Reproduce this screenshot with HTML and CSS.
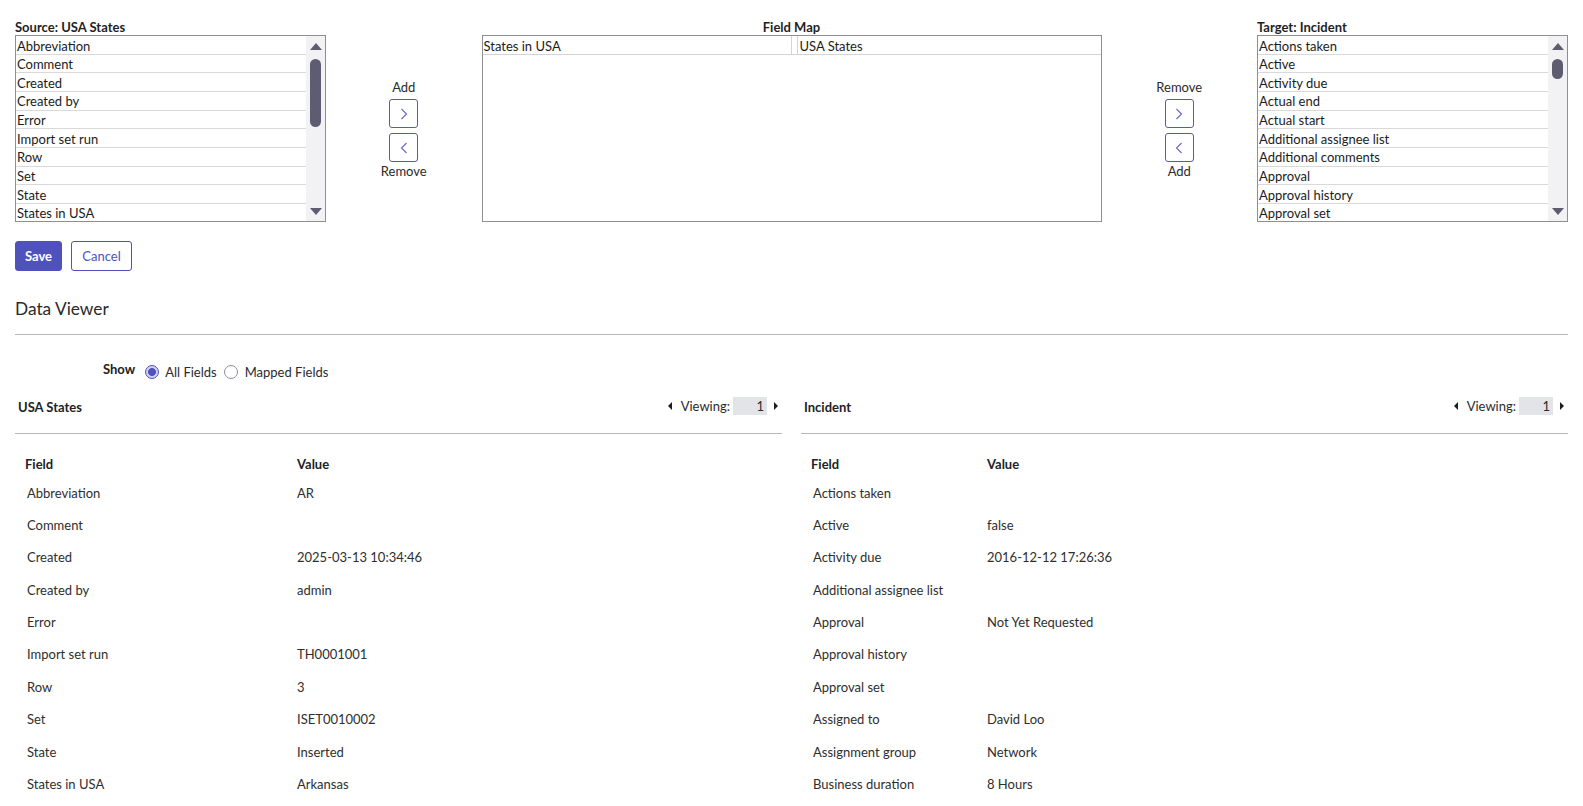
FILE: index.html
```html
<!DOCTYPE html>
<html lang="en">
<head>
<meta charset="utf-8">
<title>Field Map</title>
<link rel="stylesheet" href="styles.css">
</head>
<body>
<div class="mapper">
  <div class="col">
    <div class="col-label">Source: USA States</div>
    <div class="box list-box">
      <div class="list">
        <div class="opt">Abbreviation</div>
        <div class="opt">Comment</div>
        <div class="opt">Created</div>
        <div class="opt">Created by</div>
        <div class="opt">Error</div>
        <div class="opt">Import set run</div>
        <div class="opt">Row</div>
        <div class="opt">Set</div>
        <div class="opt">State</div>
        <div class="opt">States in USA</div>
      </div>
      <div class="sbar">
        <span class="arr up"></span>
        <div class="track"><span class="thumb thumb-src"></span></div>
        <span class="arr down"></span>
      </div>
    </div>
  </div>

  <div class="movers">
    <div class="mv-label">Add</div>
    <button class="mv-btn" type="button"><svg width="8" height="12" viewBox="0 0 8 12"><polyline points="1.5,1 6.5,6 1.5,11" /></svg></button>
    <button class="mv-btn" type="button"><svg width="8" height="12" viewBox="0 0 8 12"><polyline points="6.5,1 1.5,6 6.5,11" /></svg></button>
    <div class="mv-label mv-label-bottom">Remove</div>
  </div>

  <div class="col">
    <div class="col-label center">Field Map</div>
    <div class="box map-box">
      <div class="map-row">
        <div class="map-cell map-left">States in USA</div>
        <div class="map-cell map-right">USA States</div>
      </div>
    </div>
  </div>

  <div class="movers">
    <div class="mv-label">Remove</div>
    <button class="mv-btn" type="button"><svg width="8" height="12" viewBox="0 0 8 12"><polyline points="1.5,1 6.5,6 1.5,11" /></svg></button>
    <button class="mv-btn" type="button"><svg width="8" height="12" viewBox="0 0 8 12"><polyline points="6.5,1 1.5,6 6.5,11" /></svg></button>
    <div class="mv-label mv-label-bottom">Add</div>
  </div>

  <div class="col">
    <div class="col-label">Target: Incident</div>
    <div class="box list-box">
      <div class="list">
        <div class="opt">Actions taken</div>
        <div class="opt">Active</div>
        <div class="opt">Activity due</div>
        <div class="opt">Actual end</div>
        <div class="opt">Actual start</div>
        <div class="opt">Additional assignee list</div>
        <div class="opt">Additional comments</div>
        <div class="opt">Approval</div>
        <div class="opt">Approval history</div>
        <div class="opt">Approval set</div>
      </div>
      <div class="sbar">
        <span class="arr up"></span>
        <div class="track"><span class="thumb thumb-tgt"></span></div>
        <span class="arr down"></span>
      </div>
    </div>
  </div>
</div>

<div class="actions">
  <button class="btn btn-primary" type="button">Save</button>
  <button class="btn btn-secondary" type="button">Cancel</button>
</div>

<h2 class="dv-title">Data Viewer</h2>
<div class="dv-rule"></div>

<div class="show-row">
  <span class="show-label">Show</span>
  <span class="radio checked"></span><span class="radio-text">All Fields</span>
  <span class="radio"></span><span class="radio-text">Mapped Fields</span>
</div>

<div class="panels">
  <div class="panel src">
    <div class="panel-head">
      <span class="panel-title">USA States</span>
      <div class="viewing">
        <span class="tri tri-left"></span>
        <span class="viewing-label">Viewing:</span>
        <span class="viewing-box">1</span>
        <span class="tri tri-right"></span>
      </div>
    </div>
    <div class="dv-row dv-head"><span class="c-field">Field</span><span>Value</span></div>
    <div class="dv-row"><span class="c-field">Abbreviation</span><span>AR</span></div>
    <div class="dv-row"><span class="c-field">Comment</span><span></span></div>
    <div class="dv-row"><span class="c-field">Created</span><span>2025-03-13 10:34:46</span></div>
    <div class="dv-row"><span class="c-field">Created by</span><span>admin</span></div>
    <div class="dv-row"><span class="c-field">Error</span><span></span></div>
    <div class="dv-row"><span class="c-field">Import set run</span><span>TH0001001</span></div>
    <div class="dv-row"><span class="c-field">Row</span><span>3</span></div>
    <div class="dv-row"><span class="c-field">Set</span><span>ISET0010002</span></div>
    <div class="dv-row"><span class="c-field">State</span><span>Inserted</span></div>
    <div class="dv-row"><span class="c-field">States in USA</span><span>Arkansas</span></div>
  </div>

  <div class="panel tgt">
    <div class="panel-head">
      <span class="panel-title">Incident</span>
      <div class="viewing">
        <span class="tri tri-left"></span>
        <span class="viewing-label">Viewing:</span>
        <span class="viewing-box">1</span>
        <span class="tri tri-right"></span>
      </div>
    </div>
    <div class="dv-row dv-head"><span class="c-field">Field</span><span>Value</span></div>
    <div class="dv-row"><span class="c-field">Actions taken</span><span></span></div>
    <div class="dv-row"><span class="c-field">Active</span><span>false</span></div>
    <div class="dv-row"><span class="c-field">Activity due</span><span>2016-12-12 17:26:36</span></div>
    <div class="dv-row"><span class="c-field">Additional assignee list</span><span></span></div>
    <div class="dv-row"><span class="c-field">Approval</span><span>Not Yet Requested</span></div>
    <div class="dv-row"><span class="c-field">Approval history</span><span></span></div>
    <div class="dv-row"><span class="c-field">Approval set</span><span></span></div>
    <div class="dv-row"><span class="c-field">Assigned to</span><span>David Loo</span></div>
    <div class="dv-row"><span class="c-field">Assignment group</span><span>Network</span></div>
    <div class="dv-row"><span class="c-field">Business duration</span><span>8 Hours</span></div>
  </div>
</div>
</body>
</html>
```

FILE: styles.css
```css
* { box-sizing: border-box; }

html, body {
  margin: 0;
  background: #ffffff;
}

body {
  padding: 19px 15px 0;
  font-family: Lato, "Open Sans", "Liberation Sans", sans-serif;
  font-size: 13px;
  color: #2e2e2e;
  overflow: hidden;
}

/* ---------- Top slushbucket ---------- */
.mapper {
  display: grid;
  grid-template-columns: 311px 1fr 620px 1fr 311px;
}

.col-label {
  height: 16px;
  line-height: 16px;
  font-weight: 700;
  color: #1f1f1f;
}

.col-label.center { text-align: center; }

.box {
  height: 187px;
  border: 1px solid #8f8f8f;
  background: #fff;
}

.list-box {
  display: flex;
  overflow: hidden;
}

.list {
  flex: 1;
  overflow: hidden;
}

.opt {
  height: 18.67px;
  line-height: 17px;
  padding: 1.5px 0 0 1px;
  border-bottom: 1.67px solid #d9d9d9;
  color: #1b1b1b;
  white-space: nowrap;
}

.sbar {
  width: 19px;
  background: #f2f2f4;
  display: flex;
  flex-direction: column;
  align-items: center;
  padding: 7px 0 6px;
}

.arr {
  width: 0;
  height: 0;
  border-left: 6px solid transparent;
  border-right: 6px solid transparent;
}

.arr.up { border-bottom: 7px solid #5d5c70; }
.arr.down { border-top: 7px solid #5d5c70; }

.track {
  flex: 1;
  display: flex;
  flex-direction: column;
  align-items: center;
}

.thumb {
  width: 11px;
  margin-top: 8.5px;
  border-radius: 6px;
  background: #5d5c70;
}

.thumb-src { height: 68px; }
.thumb-tgt { height: 20px; }

/* movers */
.movers {
  display: flex;
  flex-direction: column;
  align-items: center;
  padding-top: 60px;
}

.mv-label {
  height: 16px;
  line-height: 16px;
  margin-bottom: 4px;
  color: #2b2b2b;
}

.mv-label-bottom {
  margin: 1px 0 0;
}

.mv-btn {
  width: 29px;
  height: 29px;
  padding: 0;
  margin: 0 0 5px;
  border: 1px solid #5557c2;
  border-radius: 3px;
  background: #fff;
  display: flex;
  align-items: center;
  justify-content: center;
}

.mv-btn + .mv-btn { margin-bottom: 0; }

.mv-btn svg polyline {
  fill: none;
  stroke: #6466cb;
  stroke-width: 1.1;
}

/* field map */
.map-row {
  display: flex;
  height: 18.67px;
  border-bottom: 1.5px solid #d4d4d4;
}

.map-cell {
  line-height: 17px;
  padding-top: 1.5px;
  color: #1b1b1b;
  white-space: nowrap;
}

.map-left {
  width: 309px;
  padding-left: 1px;
  border-right: 1px solid #d4d4d4;
}

.map-right {
  flex: 1;
  margin-left: 5px;
  padding-left: 2px;
  border-left: 1px solid #d4d4d4;
}

/* ---------- Save / Cancel ---------- */
.actions {
  display: flex;
  gap: 9px;
  margin-top: 19px;
}

.btn {
  height: 30px;
  padding: 0;
  border-radius: 3px;
  font-family: inherit;
  font-size: 13px;
}

.btn-primary {
  width: 47px;
  border: 1px solid #4f52bd;
  background: #4f52bd;
  color: #fff;
  font-weight: 700;
}

.btn-secondary {
  width: 61px;
  border: 1px solid #4f52bd;
  background: #fff;
  color: #4f52bd;
}

/* ---------- Data viewer ---------- */
.dv-title {
  margin: 27px 0 0;
  height: 22px;
  line-height: 22px;
  font-size: 17.3px;
  font-weight: 400;
  color: #2a2a2a;
}

.dv-rule {
  margin-top: 14px;
  height: 1px;
  background: #b7b7c6;
}

.show-row {
  display: flex;
  align-items: center;
  height: 20px;
  margin-top: 27px;
  padding-left: 88px;
}

.show-label {
  font-weight: 700;
  padding-bottom: 6px;
  margin-right: 10px;
  color: #222;
}

.radio {
  width: 14px;
  height: 14px;
  border-radius: 50%;
  border: 1px solid #8e8e9b;
  background: #fff;
  margin-right: 7px;
}

.radio.checked {
  border-color: #4f52bd;
  background: radial-gradient(circle, #4f52bd 0, #4f52bd 3.6px, #cfd0f0 4.3px, #cfd0f0 100%);
  margin-right: 6px;
}

.radio-text {
  margin-right: 7px;
  color: #2b2b2b;
}

.panels {
  display: grid;
  grid-template-columns: 1fr 1fr;
  column-gap: 19px;
  margin-top: 11px;
}

.panel-head {
  display: flex;
  align-items: center;
  justify-content: space-between;
  height: 41px;
  padding: 0 4px 13px 3px;
  border-bottom: 1px solid #b5b8c2;
}

.panel-title {
  font-weight: 700;
  color: #222;
}

.viewing {
  display: flex;
  align-items: center;
  padding-bottom: 2px;
}

.tri {
  width: 0;
  height: 0;
  border-top: 4px solid transparent;
  border-bottom: 4px solid transparent;
}

.tri-left {
  border-right: 4px solid #1e1e1e;
  margin-right: 9px;
}

.tri-right {
  border-left: 4px solid #1e1e1e;
  margin-left: 7px;
}

.viewing-label {
  margin-right: 3px;
  color: #2b2b2b;
}

.viewing-box {
  width: 34px;
  height: 18px;
  line-height: 18px;
  padding-right: 3px;
  text-align: right;
  background: #e3e4e8;
  color: #2b2b2b;
}

.dv-row {
  display: grid;
  height: 32.4px;
  line-height: 32.4px;
  padding-top: 1px;
  color: #2e2e2e;
  white-space: nowrap;
}

.src .dv-row { grid-template-columns: 282px 1fr; }
.tgt .dv-row { grid-template-columns: 186px 1fr; }

.dv-row .c-field { padding-left: 12px; }

.dv-head {
  height: 41.5px;
  padding-top: 22px;
  line-height: 16px;
  font-weight: 700;
  color: #222;
}

.dv-head .c-field { padding-left: 10px; }
```
